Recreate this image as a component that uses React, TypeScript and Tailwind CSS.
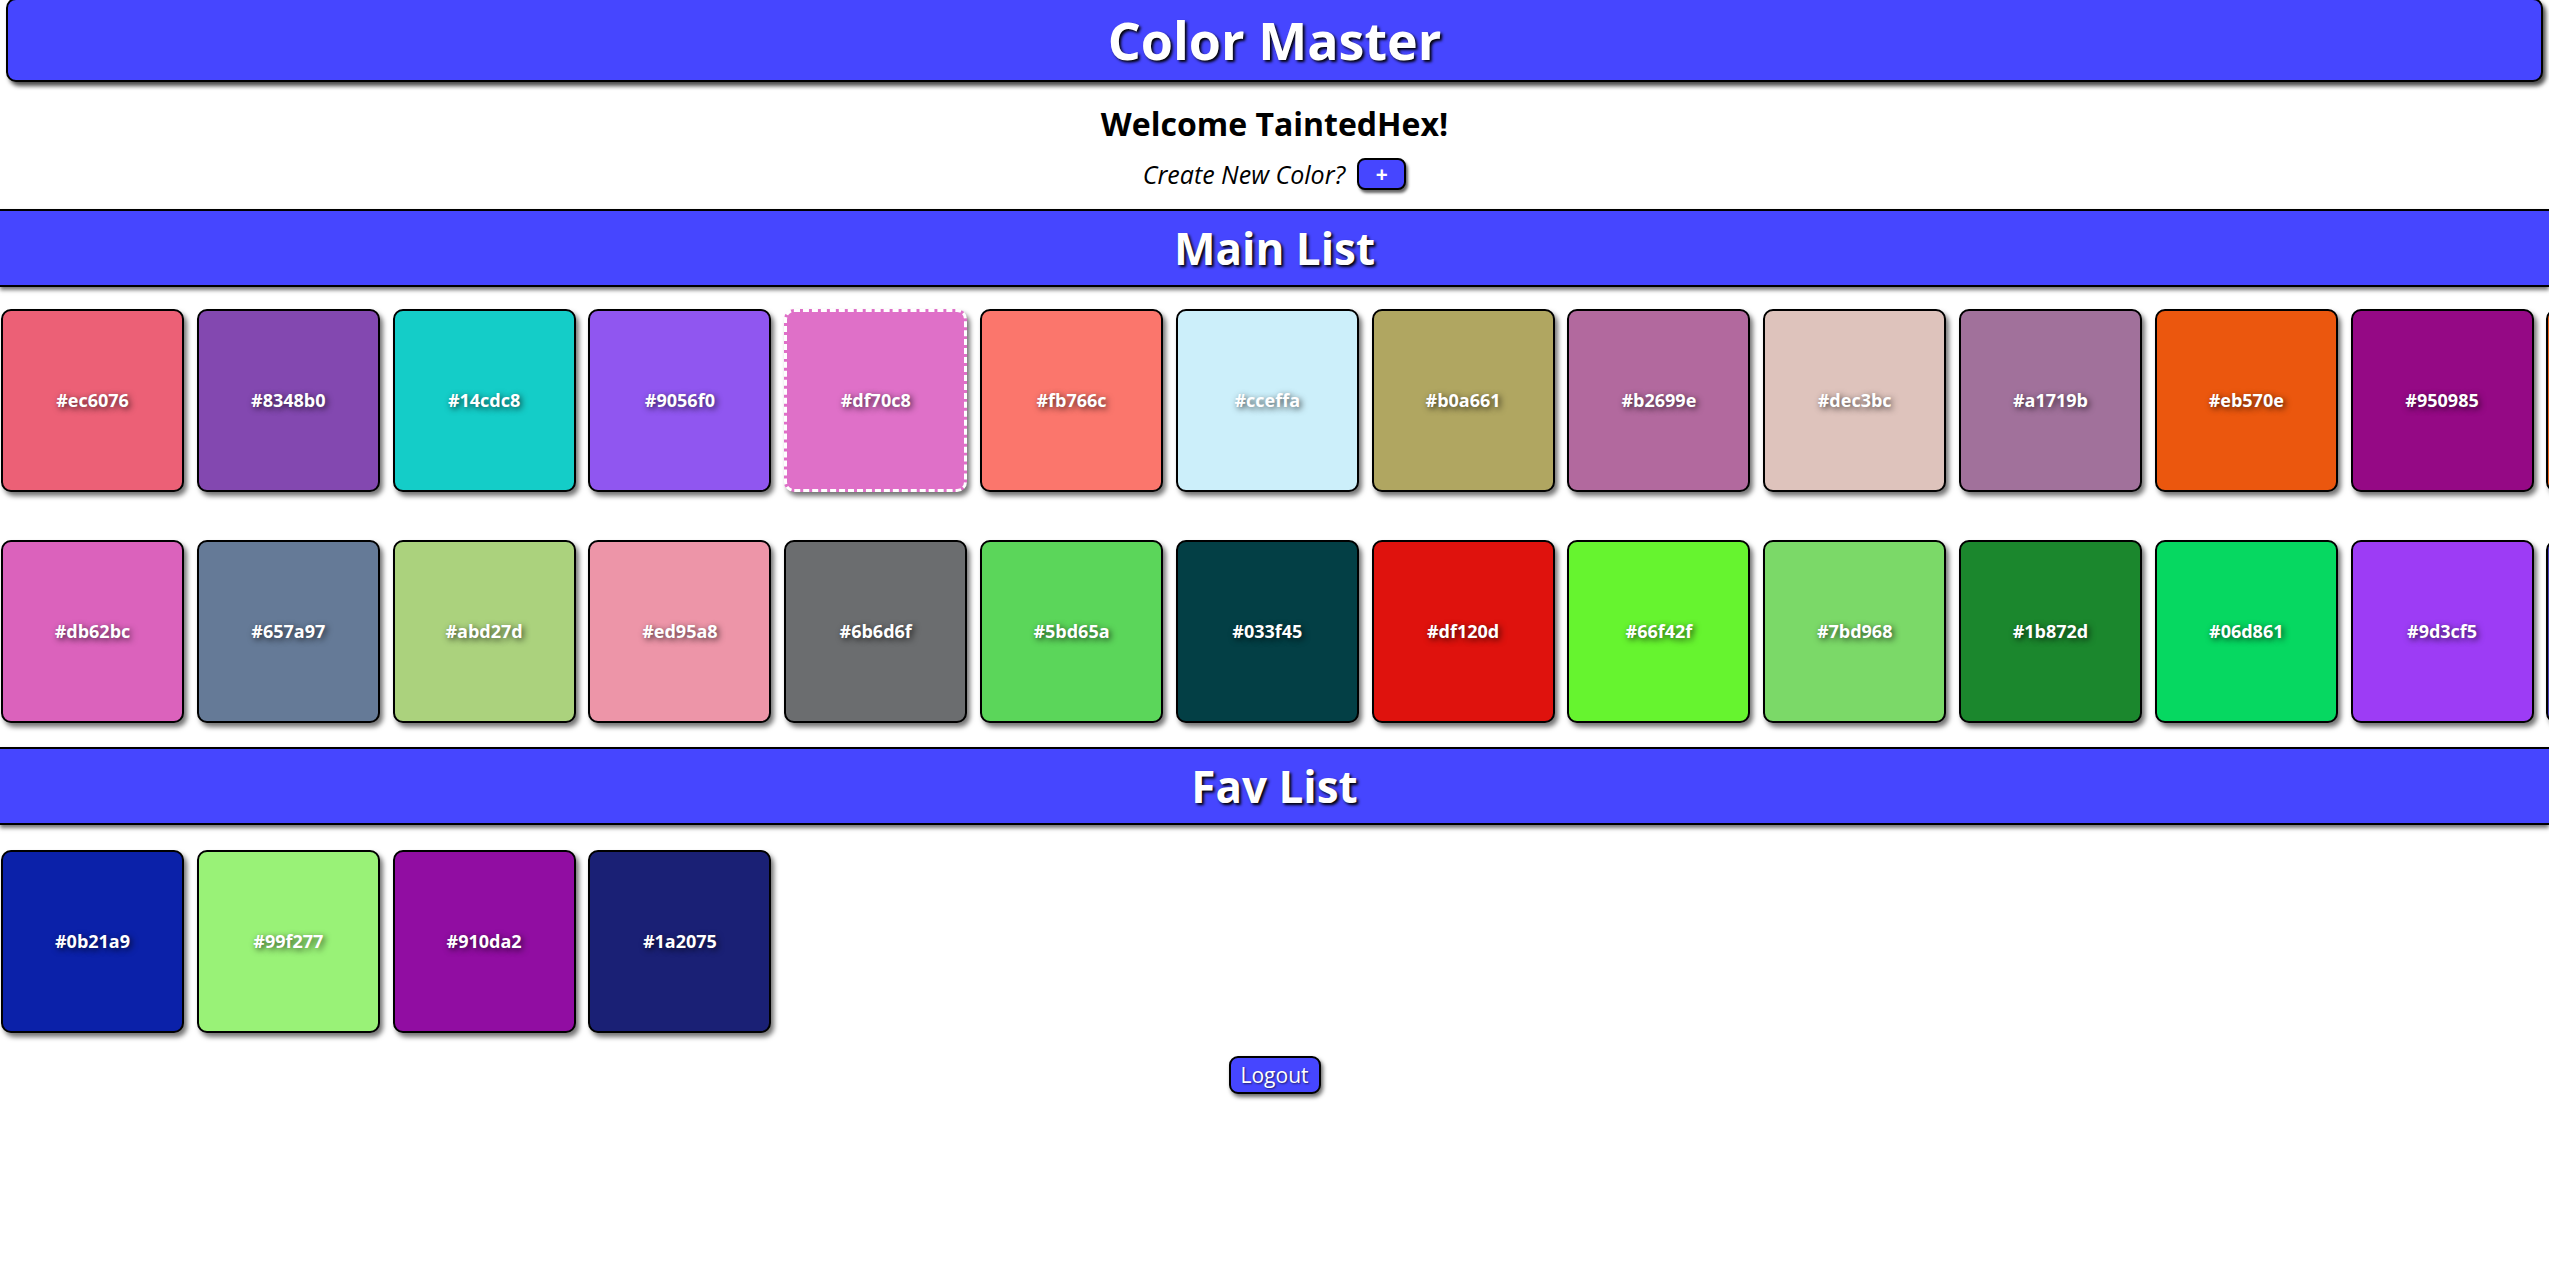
import React from "react";

const mainColors = [
  "#ec6076", "#8348b0", "#14cdc8", "#9056f0", "#df70c8", "#fb766c", "#cceffa",
  "#b0a661", "#b2699e", "#dec3bc", "#a1719b", "#eb570e", "#950985", "#e8641c",
  "#db62bc", "#657a97", "#abd27d", "#ed95a8", "#6b6d6f", "#5bd65a", "#033f45",
  "#df120d", "#66f42f", "#7bd968", "#1b872d", "#06d861", "#9d3cf5", "#4a3fb8",
];

const favColors = ["#0b21a9", "#99f277", "#910da2", "#1a2075"];

const ColorCard = ({ hex, selected }: { hex: string; selected?: boolean }) => {
  return (
    <div
      className={
        "flex h-[183px] w-[183px] shrink-0 items-center justify-center rounded-[10px] shadow-[3px_4px_5px_rgba(0,0,0,0.55)] " +
        (selected ? "border-[3px] border-dashed border-white" : "border-2 border-black")
      }
      style={{ backgroundColor: hex }}
    >
      <span className="text-[18px] font-bold text-white [text-shadow:2px_2px_6px_rgba(0,0,0,0.7)]">
        {hex}
      </span>
    </div>
  );
};

const ListBar = ({ title }: { title: string }) => (
  <div className="flex h-[78px] w-full items-center justify-center border-y-2 border-black bg-[#4646ff] shadow-[0_3px_4px_rgba(0,0,0,0.55)]">
    <h2 className="text-[44px] leading-none font-bold text-white [text-shadow:2px_2px_3px_#000]">
      {title}
    </h2>
  </div>
);

export default function App() {
  const row1 = mainColors.slice(0, 14);
  const row2 = mainColors.slice(14);

  return (
    <div className="min-h-screen w-full overflow-x-hidden bg-white font-['Open_Sans',sans-serif] text-black">
      <header className="mx-[6px] -mt-[2px] flex h-[84px] items-center justify-center rounded-[10px] border-2 border-black bg-[#4646ff] shadow-[3px_4px_4px_rgba(0,0,0,0.7)]">
        <h1 className="text-[52px] leading-none font-bold text-white [text-shadow:2px_2px_3px_#000]">
          Color Master
        </h1>
      </header>

      <div className="mt-[22px] flex h-[40px] items-center justify-center">
        <h3 className="text-[32px] leading-none font-bold">Welcome TaintedHex!</h3>
      </div>

      <div className="mt-[12px] flex h-[36px] items-center justify-center gap-[12px]">
        <span className="text-[25px] italic leading-none">Create New Color?</span>
        <button className="flex h-[32px] w-[49px] items-center justify-center rounded-[8px] border-2 border-black bg-[#4646ff] text-[21px] leading-none font-bold text-white shadow-[2px_3px_3px_rgba(0,0,0,0.6)]">
          +
        </button>
      </div>

      <div className="mt-[17px]">
        <ListBar title="Main List" />
      </div>

      <div className="mt-[22px] flex flex-nowrap gap-x-[12.8px] pl-[1px]">
        {row1.map((c) => (
          <ColorCard key={c} hex={c} selected={c === "#df70c8"} />
        ))}
      </div>
      <div className="mt-[48px] flex flex-nowrap gap-x-[12.8px] pl-[1px]">
        {row2.map((c) => (
          <ColorCard key={c} hex={c} />
        ))}
      </div>

      <div className="mt-[24px]">
        <ListBar title="Fav List" />
      </div>

      <div className="mt-[25px] flex flex-nowrap gap-x-[12.8px] pl-[1px]">
        {favColors.map((c) => (
          <ColorCard key={c} hex={c} />
        ))}
      </div>

      <div className="mt-[23px] flex justify-center">
        <button className="flex h-[38px] w-[92px] items-center justify-center rounded-[9px] border-2 border-black bg-[#4646ff] text-[21px] leading-none text-white shadow-[2px_3px_4px_rgba(0,0,0,0.6)] [text-shadow:1px_1px_2px_rgba(0,0,0,0.6)]">
          Logout
        </button>
      </div>
    </div>
  );
}
